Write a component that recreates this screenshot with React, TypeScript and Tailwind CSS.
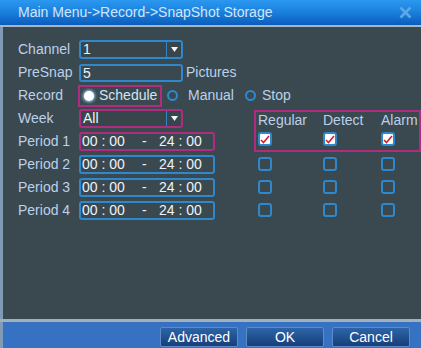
import React from 'react';

const Label = ({ children }: { children: React.ReactNode }) => (
    <span className="w-[61px] shrink-0 text-[14px] text-[#bcd0ea]">{children}</span>
);

const Select = ({ value, active }: { value: string; active?: boolean }) => (
    <div
        className={`flex h-[19px] w-[104px] items-stretch rounded-[3px] border-2 ${
            active ? 'border-[#b02c7e]' : 'border-[#2f87cc]'
        } bg-[#38464c]`}
    >
        <span className="flex-1 pl-[2px] text-[14px] leading-[15px] text-[#eef3fa]">{value}</span>
        <span className="flex w-[15px] items-center justify-center border-l border-[#2f87cc]">
            <svg width="7" height="5" viewBox="0 0 7 5">
                <path d="M0 0 H7 L3.5 5 Z" fill="#f2f6fb" />
            </svg>
        </span>
    </div>
);

const TimeBox = ({ active }: { active?: boolean }) => (
    <div
        className={`flex h-[19px] w-[136px] items-center rounded-[3px] border-2 ${
            active ? 'border-[#b02c7e]' : 'border-[#2f87cc]'
        } text-[14px] text-[#eef3fa]`}
    >
        <span className="w-[61px] pl-[1px]">00 : 00</span>
        <span className="w-[17px]">-</span>
        <span>24 : 00</span>
    </div>
);

const Check = ({ on }: { on?: boolean }) => (
    <div
        className={`flex h-[14px] w-[14px] items-center justify-center rounded-[3px] border-2 border-[#2f87cc] ${
            on ? 'bg-white' : ''
        }`}
    >
        {on && (
            <svg width="10" height="9" viewBox="0 0 10 9">
                <path d="M1 5 L3.5 7.5 L9 1" stroke="#d0202a" strokeWidth="1.6" fill="none" />
            </svg>
        )}
    </div>
);

const CheckRow = ({ on }: { on?: boolean }) => (
    <div className="flex h-[23px] items-center pl-[4px]">
        <div className="w-[65px]"><Check on={on} /></div>
        <div className="w-[58px]"><Check on={on} /></div>
        <div><Check on={on} /></div>
    </div>
);

const Btn = ({ children }: { children: React.ReactNode }) => (
    <button className="h-[20px] w-[78px] rounded-[2px] border border-[#5d8bc9] bg-gradient-to-b from-[#2d65a8] to-[#163f7a] text-[14px] leading-[16px] text-white">
        {children}
    </button>
);

export default function App() {
    return (
        <div
            className="flex h-[348px] w-[421px] flex-col bg-[#3a4950]"
            style={{ fontFamily: '"Liberation Sans", Arial, sans-serif' }}
        >
            <div className="flex h-[25px] shrink-0 items-center justify-between bg-gradient-to-b from-[#2b98f0] via-[#1a7fdc] to-[#0b5cbc] pl-[18px] pr-[9px]">
                <span className="text-[14px] text-[#d2e6fb]">Main Menu-&gt;Record-&gt;SnapShot Storage</span>
                <svg width="13" height="13" viewBox="0 0 13 13">
                    <path d="M1.5 1.5 L11.5 11.5 M11.5 1.5 L1.5 11.5" stroke="#5ea8ea" strokeWidth="2.6" />
                </svg>
            </div>
            <div className="h-[2px] shrink-0 bg-[#a8b7c3]" />

            <div className="flex-1 border-l-[3px] border-[#7f9bb6] pl-[15px] pt-[11px]">
                <div className="flex h-[23px] items-center">
                    <Label>Channel</Label>
                    <Select value="1" />
                </div>
                <div className="flex h-[23px] items-center">
                    <Label>PreSnap</Label>
                    <div className="h-[18px] w-[104px] rounded-[3px] border-2 border-[#2f87cc] pl-[2px] text-[14px] leading-[14px] text-[#eef3fa]">5</div>
                    <span className="ml-[3px] text-[14px] text-[#bcd0ea]">Pictures</span>
                </div>
                <div className="flex h-[23px] items-center">
                    <Label>Record</Label>
                    <div className="-ml-[1px] flex h-[22px] w-[84px] items-center border-2 border-[#b02c7e] pl-[4px]">
                        <span className="h-[10px] w-[10px] rounded-full bg-white shadow-[0_0_3px_1px_#9fd6ff]" />
                        <span className="ml-[5px] text-[14px] text-[#d6e2f2]">Schedule</span>
                    </div>
                    <span className="ml-[5px] h-[11px] w-[11px] rounded-full border-2 border-[#2f87cc]" />
                    <span className="ml-[10px] text-[14px] text-[#bcd0ea]">Manual</span>
                    <span className="ml-[11px] h-[11px] w-[11px] rounded-full border-2 border-[#2f87cc]" />
                    <span className="ml-[6px] text-[14px] text-[#bcd0ea]">Stop</span>
                </div>

                <div className="flex">
                    <div className="w-[236px]">
                        <div className="flex h-[23px] items-center">
                            <Label>Week</Label>
                            <Select value="All" active />
                        </div>
                        <div className="flex h-[23px] items-center">
                            <Label>Period 1</Label>
                            <TimeBox active />
                        </div>
                        <div className="flex h-[23px] items-center">
                            <Label>Period 2</Label>
                            <TimeBox />
                        </div>
                        <div className="flex h-[23px] items-center">
                            <Label>Period 3</Label>
                            <TimeBox />
                        </div>
                        <div className="flex h-[23px] items-center">
                            <Label>Period 4</Label>
                            <TimeBox />
                        </div>
                    </div>
                    <div className="flex-1">
                        <div className="mt-[3px] h-[42px] border-2 border-[#b02c7e]">
                            <div className="flex h-[16px] items-center pl-[2px] text-[14px] leading-[14px] text-[#bcd0ea]">
                                <span className="w-[65px]">Regular</span>
                                <span className="w-[58px]">Detect</span>
                                <span>Alarm</span>
                            </div>
                            <div className="flex h-[22px] items-center pl-[2px]">
                                <div className="w-[65px]"><Check on /></div>
                                <div className="w-[58px]"><Check on /></div>
                                <div><Check on /></div>
                            </div>
                        </div>
                        <div>
                            <CheckRow />
                            <CheckRow />
                            <CheckRow />
                        </div>
                    </div>
                </div>
            </div>

            <div className="h-[3px] shrink-0 bg-[#9fb0bf]" />
            <div className="flex h-[26px] shrink-0 items-center justify-end gap-[8px] border-l-[3px] border-[#7f9bb6] bg-[#3671c2] pr-[11px] pt-[4px]">
                <Btn>Advanced</Btn>
                <Btn>OK</Btn>
                <Btn>Cancel</Btn>
            </div>
        </div>
    );
}
